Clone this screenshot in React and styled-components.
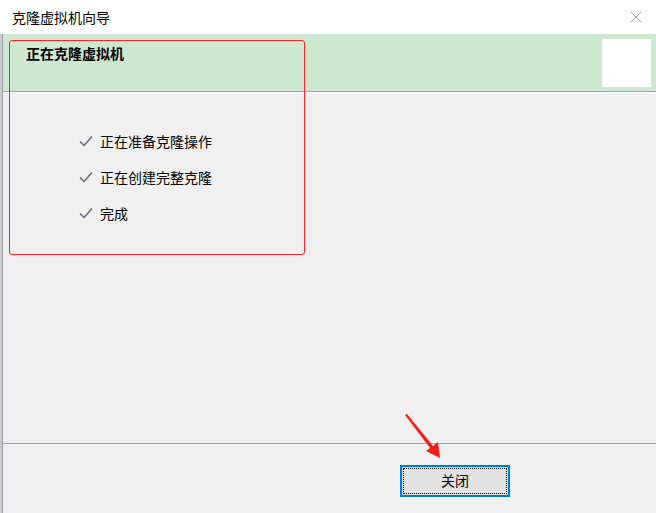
import React from 'react';
import styled, { createGlobalStyle } from 'styled-components';

const GlobalStyle = createGlobalStyle`
    html, body {
        margin: 0;
        padding: 0;
        background: #f0f0f0;
    }
    body {
        font-family: "Noto Sans CJK SC", "Noto Sans", sans-serif;
        color: #000;
    }
`;

const StyledWindow = styled.div`
    position: relative;
    width: 656px;
    height: 513px;
    display: flex;
    flex-direction: column;
    overflow: hidden;
    background: #f0f0f0;
`;

const StyledTitleBar = styled.div`
    height: 34px;
    flex: none;
    display: flex;
    align-items: center;
    justify-content: space-between;
    padding: 0 14px 0 12px;
    background: #fff;
    font-size: 14px;
`;

const StyledBody = styled.div`
    flex: 1;
    display: flex;
`;

const StyledStrip = styled.div`
    width: 2px;
    flex: none;
    background: #c9ccd0;
    border-right: 1px solid #9a9a9a;
`;

const StyledMain = styled.div`
    flex: 1;
    display: flex;
    flex-direction: column;
`;

const StyledHeader = styled.div`
    height: 57px;
    flex: none;
    display: flex;
    justify-content: space-between;
    background: #cde8d0;
    border-bottom: 1px solid #a0a0a0;
    box-shadow: 0 1px 0 #fff;
`;

const StyledHeaderTitle = styled.div`
    padding: 10px 0 0 23px;
    font-size: 14px;
    font-weight: bold;
    line-height: 18px;
`;

const StyledHeaderImage = styled.div`
    width: 49px;
    height: 48px;
    margin: 5px 5px 0 0;
    background: #fff;
`;

const StyledContent = styled.div`
    flex: 1;
    display: flex;
    flex-direction: column;
    gap: 16px;
    padding: 39px 0 0 75px;
`;

const StyledStep = styled.div`
    display: flex;
    align-items: center;
    gap: 6px;
    height: 20px;
    font-size: 14px;
`;

const StyledFooter = styled.div`
    height: 70px;
    flex: none;
    display: flex;
    justify-content: flex-end;
    padding: 21px 146px 0 0;
    box-sizing: border-box;
    border-top: 1px solid #a0a0a0;
`;

const StyledButton = styled.button`
    position: relative;
    width: 110px;
    height: 32px;
    border: 2px solid #0078d7;
    background: #e1e1e1;
    font-family: inherit;
    font-size: 14px;
    line-height: 26px;
    color: #000;
    padding: 0 0 2px;

    &::after {
        content: '';
        position: absolute;
        inset: 1px;
        border: 1px dotted #000;
    }
`;

const StyledMarker = styled.div`
    position: absolute;
    left: 9px;
    top: 40px;
    width: 296px;
    height: 215px;
    box-sizing: border-box;
    border: 1.5px solid #ff2424;
    border-radius: 3px;
    pointer-events: none;
`;

const StyledArrow = styled.svg`
    position: absolute;
    left: 400px;
    top: 410px;
    pointer-events: none;
`;

const CloseIcon = () => (
    <svg width="12" height="12" viewBox="0 0 12 12">
        <path d="M1 1L11 11M11 1L1 11" stroke="#a0a0a0" strokeWidth="1" fill="none" />
    </svg>
);

const CheckIcon = () => (
    <svg width="16" height="14" viewBox="0 0 16 14">
        <path d="M2 7.5L6 11.5L14 2.5" stroke="#5b6570" strokeWidth="1.4" fill="none" />
    </svg>
);

const steps = ['正在准备克隆操作', '正在创建完整克隆', '完成'];

const App = () => (
    <>
        <GlobalStyle />
        <StyledWindow>
            <StyledTitleBar>
                <span>克隆虚拟机向导</span>
                <CloseIcon />
            </StyledTitleBar>
            <StyledBody>
                <StyledStrip />
                <StyledMain>
                    <StyledHeader>
                        <StyledHeaderTitle>正在克隆虚拟机</StyledHeaderTitle>
                        <StyledHeaderImage />
                    </StyledHeader>
                    <StyledContent>
                        {steps.map(step => (
                            <StyledStep key={step}>
                                <CheckIcon />
                                <span>{step}</span>
                            </StyledStep>
                        ))}
                    </StyledContent>
                    <StyledFooter>
                        <StyledButton type="button">关闭</StyledButton>
                    </StyledFooter>
                </StyledMain>
            </StyledBody>

            {/* annotation overlay */}
            <StyledMarker />
            <StyledArrow width="50" height="55" viewBox="0 0 50 55">
                <path d="M5 5L7 4L33 36L38 32L40 48L26 41L30 38Z" fill="#ff1a1a" />
            </StyledArrow>
        </StyledWindow>
    </>
);

export default App;
